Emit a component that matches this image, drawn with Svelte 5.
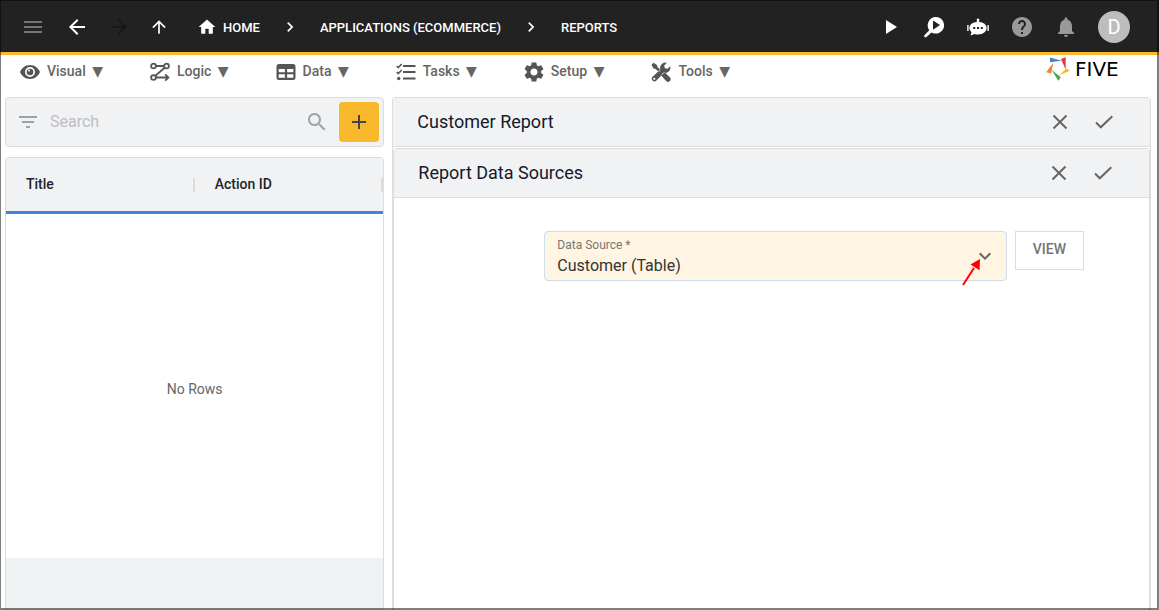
<script>
  const menus = [
    { label: 'Visual', icon: 'eye' },
    { label: 'Logic', icon: 'logic' },
    { label: 'Data', icon: 'table' },
    { label: 'Tasks', icon: 'tasks' },
    { label: 'Setup', icon: 'gear' },
    { label: 'Tools', icon: 'tools' }
  ];
  const crumbs = ['APPLICATIONS (ECOMMERCE)', 'REPORTS'];
  let search = $state('');
  let source = $state('Customer (Table)');
</script>

{#snippet closeIcon()}
  <svg viewBox="0 0 24 24" width="24" height="24" fill="none" stroke="currentColor" stroke-width="2"><path d="M5.500 5.500 18.500 18.500M18.500 5.500 5.500 18.500" /></svg>
{/snippet}
{#snippet checkIcon()}
  <svg viewBox="0 0 24 24" width="24" height="24" fill="none" stroke="currentColor" stroke-width="2"><path d="M4 12.500 8.800 17.300 20.300 6.300" /></svg>
{/snippet}

<div class="app">
  <header>
    <nav class="history" aria-label="History">
      <button class="dim" aria-label="Menu"><svg viewBox="0 0 24 24" width="24" height="24"><path d="M3 18h18v-2H3zm0-5h18v-2H3zm0-7v2h18V6z" /></svg></button>
      <button aria-label="Back"><svg viewBox="0 0 24 24" width="24" height="24"><path d="M20 11H7.830l5.590-5.590L12 4l-8 8 8 8 1.410-1.410L7.830 13H20z" /></svg></button>
      <button class="off" aria-label="Forward" disabled><svg viewBox="0 0 24 24" width="24" height="24"><path d="m12 4-1.410 1.410L16.170 11H4v2h12.170l-5.580 5.590L12 20l8-8z" /></svg></button>
      <button class="up" aria-label="Up"><svg viewBox="0 0 24 24" width="20" height="20"><path d="m4 12 1.410 1.410L11 7.830V20h2V7.830l5.580 5.590L20 12l-8-8z" /></svg></button>
    </nav>
    <nav class="crumbs" aria-label="Breadcrumb">
      <a href="#home"><svg viewBox="0 0 24 24" width="20" height="20"><path d="M10 20v-6h4v6h5v-8h3L12 3 2 12h3v8z" /></svg>HOME</a>
      {#each crumbs as crumb}
        <svg viewBox="0 0 24 24" width="20" height="20"><path d="M10 6 8.590 7.410 13.170 12l-4.580 4.590L10 18l6-6z" /></svg>
        <a href="#{crumb}">{crumb}</a>
      {/each}
    </nav>
    <div class="actions">
      <button aria-label="Run"><svg viewBox="0 0 24 24" width="24" height="24"><path d="M8 5v14l11-7z" /></svg></button>
      <button aria-label="Inspect"><svg viewBox="0 0 24 24" width="24" height="24"><path fill-rule="evenodd" d="M13.700 2a8.300 8.300 0 1 1-4.200 15.400L4.500 22a1.300 1.300 0 0 1-1.900-1.900l4.700-4.900A8.300 8.300 0 0 1 13.700 2ZM11 5.500v9.200l7-4.600z" /></svg></button>
      <button aria-label="Assistant"><svg viewBox="0 0 24 24" width="24" height="24"><path fill-rule="evenodd" d="M12 3.500a1.300 1.300 0 0 1 1.200 1.800V7c4.300.300 7.400 2.600 7.400 6s-3.300 6.500-8.600 6.500c-1.300 0-2.500-.200-3.500-.600L4.500 20.500l1-3.200A5.500 5.500 0 0 1 3.400 13c0-3.400 3.100-5.700 7.400-6V5.300A1.300 1.300 0 0 1 12 3.500ZM7.200 12v2h2v-2zm3.800 0v2h2v-2zm3.800 0v2h2v-2zM1.200 10h1.400v6H1.200zm20.200 0h1.400v6h-1.400z" /></svg></button>
      <button class="gray" aria-label="Help"><svg viewBox="0 0 24 24" width="24" height="24"><path d="M12 2C6.480 2 2 6.480 2 12s4.480 10 10 10 10-4.480 10-10S17.520 2 12 2m1 17h-2v-2h2zm2.070-7.750-.900.920C13.450 12.900 13 13.500 13 15h-2v-.500c0-1.100.450-2.100 1.170-2.830l1.240-1.260c.370-.360.590-.860.590-1.410 0-1.100-.900-2-2-2s-2 .900-2 2H8c0-2.210 1.790-4 4-4s4 1.790 4 4c0 .880-.360 1.680-.930 2.250" /></svg></button>
      <button class="gray" aria-label="Notifications"><svg viewBox="0 0 24 24" width="24" height="24"><path d="M12 22c1.100 0 2-.900 2-2h-4c0 1.100.890 2 2 2m6-6v-5c0-3.070-1.640-5.640-4.500-6.320V4c0-.830-.670-1.500-1.500-1.500s-1.500.670-1.500 1.500v.680C7.630 5.360 6 7.920 6 11v5l-2 2v1h16v-1z" /></svg></button>
      <button class="avatar" aria-label="Account">D</button>
    </div>
  </header>

  <div class="menubar">
    <nav aria-label="Main">
      {#each menus as menu}
        <button>
          {#if menu.icon === 'eye'}
            <svg viewBox="0 0 20 20" width="20" height="20"><path fill-rule="evenodd" d="M10 3C5.500 3 1.700 5.800 0 10c1.700 4.200 5.500 7 10 7s8.300-2.800 10-7c-1.700-4.200-5.500-7-10-7Zm0 2a5 5 0 1 1 0 10 5 5 0 0 1 0-10Z" /><circle cx="10" cy="10" r="3.300" /><circle cx="9" cy="8.500" r="1" fill="#fff" /></svg>
          {:else if menu.icon === 'logic'}
            <svg viewBox="0 0 20 20" width="20" height="20" fill="none" stroke="currentColor" stroke-width="1.800"><circle cx="3.500" cy="4" r="2.400" /><circle cx="16.500" cy="4" r="2.400" /><circle cx="3.500" cy="15.500" r="2.400" /><path d="M6 4h8M14.700 5.800 5.300 13.700M6 15.500h12M15.200 12.300l3.200 3.200-3.200 3.200" /></svg>
          {:else if menu.icon === 'table'}
            <svg viewBox="0 0 20 20" width="20" height="20"><path fill-rule="evenodd" d="M3 2h14a2.500 2.500 0 0 1 2.500 2.500v11A2.500 2.500 0 0 1 17 18H3a2.500 2.500 0 0 1-2.500-2.500v-11A2.500 2.500 0 0 1 3 2Zm-.300 5v3.300h6.200V7Zm8.400 0v3.300h6.200V7Zm-8.400 5.200v3.500h6.200v-3.500Zm8.400 0v3.500h6.200v-3.500Z" /></svg>
          {:else if menu.icon === 'tasks'}
            <svg viewBox="0 0 20 20" width="20" height="20" fill="none" stroke="currentColor" stroke-width="2"><path d="M7 4h12.500M7 10h12.500M7 16.500h12.500" /><path stroke-width="1.600" d="m.700 4 1.600 1.600L5.700 2M.700 10l1.600 1.600L5.700 8" /><circle cx="2.700" cy="16.500" r="1.700" fill="currentColor" stroke="none" /></svg>
          {:else if menu.icon === 'gear'}
            <svg viewBox="2 2 20 20" width="20" height="20"><path d="M19.140 12.940c.040-.300.060-.610.060-.940 0-.320-.020-.640-.070-.940l2.030-1.580c.180-.140.230-.410.120-.610l-1.920-3.320c-.120-.220-.370-.290-.590-.220l-2.390.960c-.500-.380-1.030-.700-1.620-.940l-.360-2.540c-.040-.240-.240-.410-.480-.410h-3.840c-.240 0-.430.170-.470.410l-.360 2.540c-.590.240-1.130.570-1.620.940l-2.390-.960c-.220-.080-.470 0-.590.220L2.740 8.870c-.120.210-.080.470.120.610l2.030 1.580c-.050.300-.090.630-.090.940s.020.640.070.940l-2.030 1.580c-.180.140-.230.410-.120.610l1.920 3.320c.120.220.370.290.590.220l2.390-.960c.500.380 1.030.700 1.620.940l.360 2.540c.050.240.240.410.480.410h3.840c.240 0 .440-.170.470-.410l.360-2.540c.590-.240 1.130-.560 1.620-.940l2.390.960c.220.080.470 0 .590-.220l1.920-3.320c.120-.220.070-.470-.120-.610zM12 15.600c-1.980 0-3.600-1.620-3.600-3.600s1.620-3.600 3.600-3.600 3.600 1.620 3.600 3.600-1.620 3.600-3.600 3.600" /></svg>
          {:else}
            <svg viewBox="0 0 20 20" width="20" height="20"><path d="M2.500.700 6 2.900l.500 2.200 3 3-1.800 1.800-3-3-2.200-.500L.500 3zM12.200 10.800l1.300-.500 5.300 5a2.600 2.600 0 0 1-3.700 3.700l-4.700-5.200.300-1.500zM19.200 4.200l-2.700 2.600-2.700-.600-.600-2.700L15.800.800a5.300 5.300 0 0 0-6.500 6.600L1.400 15a2.700 2.700 0 0 0 3.800 3.800l7.800-8a5.300 5.300 0 0 0 6.200-6.600ZM3.300 17.900a1.100 1.100 0 1 1 0-2.200 1.100 1.100 0 0 1 0 2.200Z" fill-rule="evenodd" /></svg>
          {/if}
          <span>{menu.label} <span class="caret">▼</span></span>
        </button>
      {/each}
    </nav>
    <a class="brand" href="#five">
      <svg viewBox="0 0 24 24" width="24" height="24"><path fill="#4384d8" d="m4 .500 11.700 3.200L4 5.200z" /><path fill="#e23b3f" d="M19.700.200v12.500L15 2z" /><path fill="#f7b92c" d="M24 13.700 13.200 18.300l7.300-6.900z" /><path fill="#3fa654" d="m5.700 13 9.200 7.200-2.600 3.600z" /><path fill="#f58232" d="M7.200 5.700 5.200 16.500.300 15.300z" /></svg>
      <span>FIVE</span>
    </a>
  </div>

  <main>
    <section class="list">
      <div class="search">
        <button aria-label="Filter"><svg viewBox="0 0 24 24" width="24" height="24"><path d="M10 18h4v-2h-4zM3 6v2h18V6zm3 7h12v-2H6z" /></svg></button>
        <input type="text" placeholder="Search" aria-label="Search" bind:value={search} />
        <button aria-label="Run search"><svg viewBox="0 0 24 24" width="24" height="24"><path d="M15.500 14h-.790l-.280-.270C15.410 12.590 16 11.110 16 9.500 16 5.910 13.090 3 9.500 3S3 5.910 3 9.500 5.910 16 9.500 16c1.610 0 3.090-.590 4.230-1.570l.270.280v.790l5 4.990L20.490 19zm-6 0C7.010 14 5 11.990 5 9.500S7.010 5 9.500 5 14 7.010 14 9.500 11.990 14 9.500 14" /></svg></button>
        <button class="add" aria-label="Add"><svg viewBox="0 0 24 24" width="24" height="24"><path d="M19 13h-6v6h-2v-6H5v-2h6V5h2v6h6z" /></svg></button>
      </div>
      <div class="grid">
        <table>
          <thead><tr><th scope="col">Title</th><th scope="col">Action ID</th></tr></thead>
        </table>
        <p>No Rows</p>
        <footer></footer>
      </div>
    </section>

    <section class="report">
      <div class="bar">
        <h1>Customer Report</h1>
        <button aria-label="Close report">{@render closeIcon()}</button>
        <button aria-label="Save report">{@render checkIcon()}</button>
      </div>
      <section class="sources">
        <div class="bar">
          <h2>Report Data Sources</h2>
          <button aria-label="Close data sources">{@render closeIcon()}</button>
          <button aria-label="Save data sources">{@render checkIcon()}</button>
        </div>
        <form>
          <div class="field">
            <label for="source">Data Source *</label>
            <select id="source" bind:value={source}>
              <option>Customer (Table)</option>
            </select>
            <svg class="chevron" viewBox="0 0 24 24" width="24" height="24"><path d="M16.590 8.590 12 13.170 7.410 8.590 6 10l6 6 6-6z" /></svg>
            <svg class="pointer" viewBox="0 0 20 28" width="20" height="28"><path d="M1 27 12 10" stroke="#f00" stroke-width="2" /><path d="M18 1 17.500 12.200 8.500 6.500z" fill="#f00" /></svg>
          </div>
          <button type="button">VIEW</button>
        </form>
      </section>
    </section>
  </main>
</div>

<style>
  :global(body) { margin: 0; background: #fff; }
  .app {
    position: relative;
    box-sizing: border-box;
    display: flex;
    flex-direction: column;
    min-height: 100vh;
    font-family: Roboto, sans-serif;
    color: #212529;
  }
  .app::after {
    content: '';
    position: absolute;
    inset: 0;
    border: solid rgba(0, 0, 0, 0.5);
    border-width: 1px 2px 2px 1px;
    pointer-events: none;
  }
  .app * { box-sizing: border-box; }
  svg { display: block; flex: none; fill: currentColor; }
  svg[fill='none'] { fill: none; }
  button {
    display: flex;
    align-items: center;
    justify-content: center;
    padding: 0;
    border: 0;
    background: none;
    color: inherit;
    font: inherit;
  }
  a { color: inherit; text-decoration: none; }

  header {
    display: flex;
    align-items: center;
    height: 55px;
    padding: 0 29px 0 21px;
    border-bottom: 3px solid #fbb92b;
    background: #222;
    color: #fff;
  }
  .history, .crumbs, .actions { display: flex; align-items: center; padding-top: 2px; }
  .history { gap: 18px; }
  .history button:first-child { margin-right: 2px; }
  .dim { color: #757575; }
  .off { color: #181818; }
  .crumbs { margin-left: 28px; gap: 20px; font-size: 13px; font-weight: 500; }
  .crumbs a { display: flex; align-items: center; gap: 6px; }
  .actions { margin-left: auto; gap: 20px; }
  .gray { color: #999; }
  .avatar { width: 32px; height: 32px; border-radius: 50%; background: #bdbdbd; font-size: 20px; }

  .menubar {
    display: flex;
    justify-content: space-between;
    height: 42px;
    padding: 0 25px 0 20px;
    color: #666;
  }
  .menubar nav { display: flex; gap: 47px; height: 34px; }
  .menubar button { gap: 7px; font-size: 14px; font-weight: 500; line-height: 16px; }
  .menubar button > span { padding-bottom: 2px; }
  .menubar button svg { color: #555; }
  .caret { margin-left: 3px; font-family: 'DejaVu Sans', sans-serif; font-weight: 400; }
  .brand { display: flex; align-items: center; gap: 5px; height: 28px; color: #000; font: 20px 'DejaVu Sans', sans-serif; }
  .brand span { min-width: 59px; }

  main {
    flex: 1;
    display: grid;
    grid-template-columns: 1fr 2fr;
    gap: 8px;
    padding: 0 8px 0 5px;
  }
  .list { display: flex; flex-direction: column; gap: 10px; min-width: 0; }
  .search {
    display: flex;
    align-items: center;
    height: 50px;
    padding: 0 4px 0 10px;
    border: 1px solid #ddd;
    border-radius: 4px;
    background: #f1f2f4;
    color: #9aa3aa;
  }
  .search input {
    flex: 1;
    min-width: 0;
    padding: 0 10px 2px;
    border: 0;
    outline: 0;
    background: none;
    font: 16px Roboto, sans-serif;
    color: #212529;
  }
  .search input::placeholder { color: #bdbfc1; opacity: 1; }
  .search .add { width: 40px; height: 40px; margin-left: 10px; border-radius: 4px; background: #f8b82b; color: #444; }

  .grid {
    flex: 1;
    display: flex;
    flex-direction: column;
    border: 1px solid #ddd;
    border-bottom: 0;
    border-radius: 4px 4px 0 0;
  }
  table { width: 100%; border-spacing: 0; table-layout: fixed; background: #f1f2f4; }
  th {
    height: 56px;
    padding: 0 20px 2px;
    border-bottom: 3px solid #4285d8;
    background: linear-gradient(#ddd, #ddd) right center / 2px 14px no-repeat;
    font-size: 14px;
    font-weight: 500;
    text-align: left;
  }
  .grid p { flex: 1; display: grid; place-items: center; margin: 0; padding-top: 6px; font-size: 14px; color: #666; }
  footer { height: 52px; background: #eef2f3; }

  .report {
    display: flex;
    flex-direction: column;
    gap: 1px;
    min-width: 0;
    border: 1px solid #ddd;
    border-bottom: 0;
    border-radius: 4px 4px 0 0;
  }
  .bar {
    display: flex;
    align-items: center;
    gap: 20px;
    height: 49px;
    padding: 0 34px 0 24px;
    border-bottom: 1px solid #ddd;
    background: #f1f2f4;
    color: #666;
  }
  h1, h2 { flex: 1; margin: 0; padding-bottom: 2px; font-size: 18px; font-weight: 400; color: #14192b; }
  .sources { flex: 1; border: 1px solid #ddd; border-bottom: 0; border-radius: 4px 4px 0 0; }
  form { display: flex; align-items: flex-start; gap: 8px; padding: 33px 65px 0 150px; }
  .field {
    position: relative;
    flex: 1;
    height: 50px;
    border: 1px solid #cddde9;
    border-radius: 4px;
    background: #fff5e2;
  }
  label { position: absolute; top: 6px; left: 12px; font-size: 12px; line-height: 14px; color: #777; }
  select {
    appearance: none;
    width: 100%;
    height: 100%;
    padding: 18px 12px 0;
    border: 0;
    outline: 0;
    background: none;
    font: 16px Roboto, sans-serif;
    color: #333;
  }
  .chevron { position: absolute; top: 12px; right: 9px; color: #666; pointer-events: none; }
  .pointer { position: absolute; top: 26px; right: 24px; pointer-events: none; }
  form button { height: 39px; padding: 0 17px 4px; border: 1px solid #ddd; font-size: 14px; font-weight: 500; color: #757575; }
</style>
